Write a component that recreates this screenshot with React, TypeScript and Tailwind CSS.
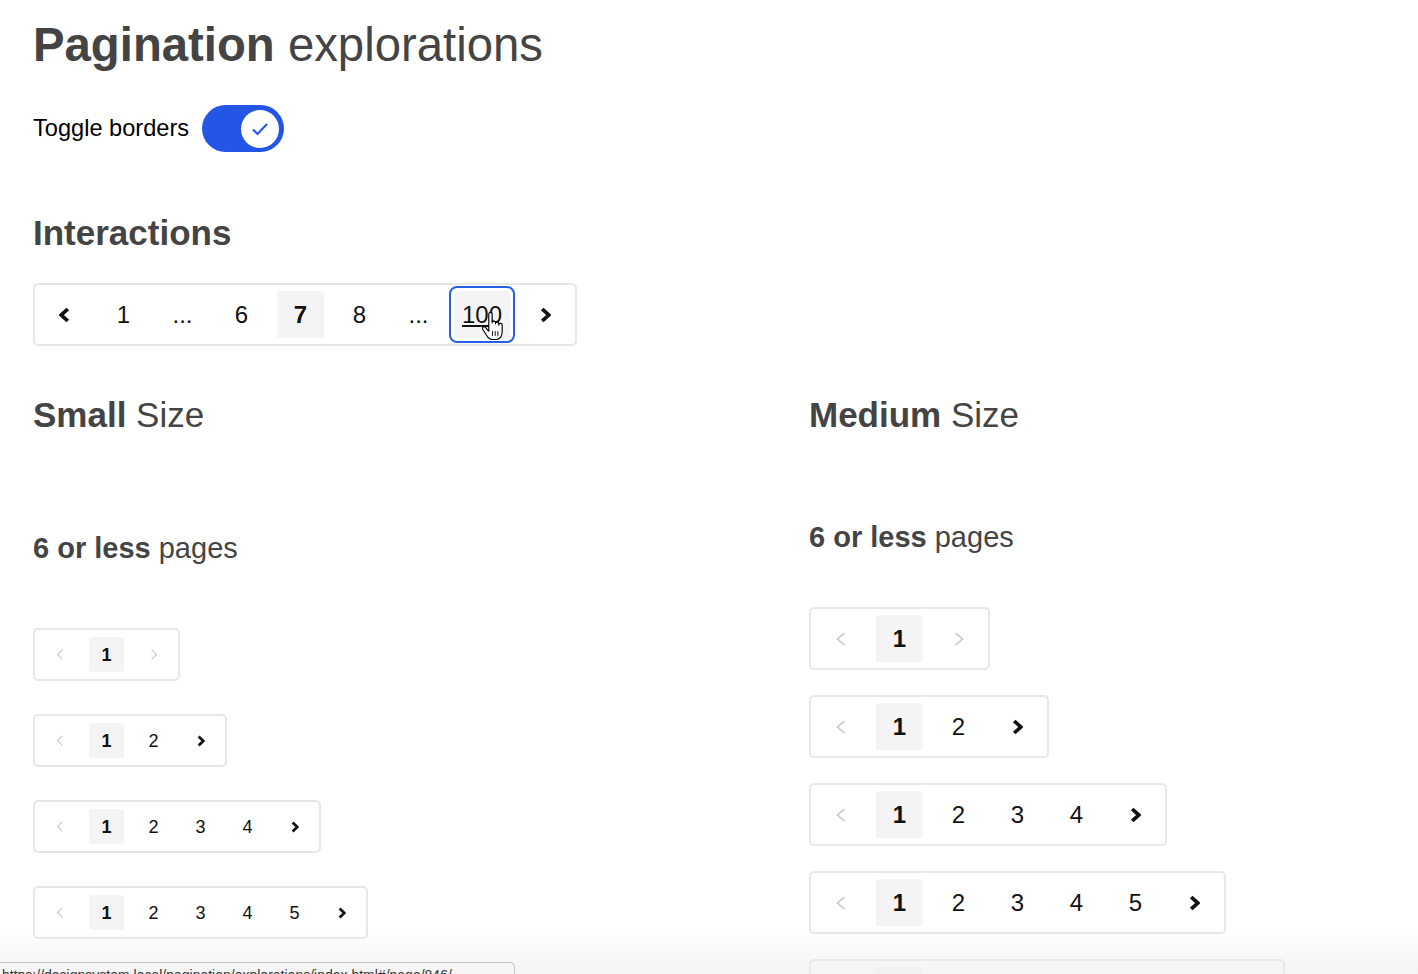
import React from "react";

type Size = "sm" | "md";

function Chevron({ dir, enabled, size }: { dir: "l" | "r"; enabled: boolean; size: Size }) {
  const w = size === "md" ? (enabled ? 11 : 12) : 8;
  const h = size === "md" ? (enabled ? 16 : 16) : enabled ? 12 : 13;
  const d = dir === "r" ? "M2 2 L8 8 L2 14" : "M8 2 L2 8 L8 14";
  return (
    <svg width={w} height={h} viewBox="0 0 10 16" preserveAspectRatio="none" aria-hidden>
      <path
        d={d}
        fill="none"
        stroke={enabled ? "#111111" : "#cdcdcd"}
        strokeWidth={enabled ? 3.4 : 1.7}
        strokeLinecap="butt"
        strokeLinejoin="miter"
      />
    </svg>
  );
}

function HandCursor() {
  return (
    <svg
      width="23"
      height="33"
      viewBox="0 0 22 30"
      className="absolute left-[28px] top-[20px] pointer-events-none"
      aria-hidden
    >
      <path
        d="M6.5 2.2 a1.6 1.6 0 0 1 3.2 0 v8.3 a1.6 1.6 0 0 1 3.2 0 v1 a1.6 1.6 0 0 1 3.2 0 v1.2 a1.6 1.6 0 0 1 3.2 0 v6.3 c0 4 -2.2 7.5 -5.5 7.5 h-4.2 c-2.2 0 -3.4 -1.2 -4.8 -3.4 l-4 -6.2 a1.6 1.6 0 0 1 2.6 -1.9 l3.1 3.6 z"
        fill="#ffffff"
        stroke="#000000"
        strokeWidth="1.1"
        strokeLinejoin="round"
      />
      <path d="M10 18.5 v4.5 M12.6 18.5 v4.5 M15.2 18.5 v4.5" stroke="#000" strokeWidth="0.9" />
    </svg>
  );
}

const FONT = { fontFamily: '"Liberation Sans", Arial, Helvetica, sans-serif' };

function Item({
  children,
  size,
  current,
  wide,
  hover,
}: {
  children: React.ReactNode;
  size: Size;
  current?: boolean;
  wide?: boolean;
  hover?: boolean;
}) {
  const base =
    size === "md"
      ? "m-[6px] h-[47px] min-w-[47px] text-[24px]"
      : "m-[6px] h-[35px] min-w-[35px] text-[18px]";
  return (
    <div
      className={
        base +
        " relative flex items-center justify-center rounded-[3px] leading-none text-[#111111] " +
        (current ? "bg-[#f4f4f4] font-bold " : "") +
        (hover ? "bg-[#f4f4f4] underline outline-2 outline-solid outline-[#2461e6] outline-offset-[3px] rounded-[2px] " : "") +
        (wide ? "px-[8px] " : "")
      }
    >
      {children}
    </div>
  );
}

function Pager({ size, pages }: { size: Size; pages: number }) {
  const nums = Array.from({ length: pages }, (_, i) => i + 1);
  return (
    <div
      className={
        "inline-flex self-start border-2 border-[#e7e7e7] rounded-[5px] bg-white " +
        (size === "sm" ? "p-[1px]" : "")
      }
    >
      <Item size={size}>
        <Chevron dir="l" enabled={false} size={size} />
      </Item>
      {nums.map((n) => (
        <Item key={n} size={size} current={n === 1}>
          {n}
        </Item>
      ))}
      <Item size={size}>
        <Chevron dir="r" enabled={pages > 1} size={size} />
      </Item>
    </div>
  );
}

export default function App() {
  return (
    <div className="min-h-screen bg-white pl-[33px] text-[#444444] overflow-hidden" style={FONT}>
      <h1 className="pt-[21px] text-[47.3px] leading-none">
        <span className="font-bold">Pagination</span> explorations
      </h1>

      <div className="mt-[37px] flex items-center gap-[13px]">
        <span className="text-[23.6px] leading-none text-black">Toggle borders</span>
        <div className="relative h-[47px] w-[82px] rounded-full bg-[#2356e6]">
          <div className="absolute right-[5px] top-[4.5px] flex h-[38px] w-[38px] items-center justify-center rounded-full bg-white">
            <svg width="18" height="14" viewBox="0 0 18 14" aria-hidden>
              <path d="M2 7.5 L6.5 12 L16 2" fill="none" stroke="#2356e6" strokeWidth="2" />
            </svg>
          </div>
        </div>
      </div>

      <h2 className="mt-[63px] text-[35px] font-bold leading-none">Interactions</h2>

      <div className="mt-[33px] inline-flex border-2 border-[#e7e7e7] rounded-[5px]">
        <Item size="md">
          <Chevron dir="l" enabled size="md" />
        </Item>
        <Item size="md">1</Item>
        <Item size="md">...</Item>
        <Item size="md">6</Item>
        <Item size="md" current>
          7
        </Item>
        <Item size="md">8</Item>
        <Item size="md">...</Item>
        <Item size="md" wide hover>
          100
          <HandCursor />
        </Item>
        <Item size="md">
          <Chevron dir="r" enabled size="md" />
        </Item>
      </div>

      <div className="mt-[51px] grid grid-cols-[776px_1fr]">
        <div className="flex flex-col">
          <h2 className="text-[35px] leading-none">
            <span className="font-bold">Small</span> Size
          </h2>
          <h3 className="mt-[102px] text-[29px] leading-none">
            <span className="font-bold">6 or less</span> pages
          </h3>
          <div className="mt-[65px] flex flex-col items-start gap-[33px]">
            <Pager size="sm" pages={1} />
            <Pager size="sm" pages={2} />
            <Pager size="sm" pages={4} />
            <Pager size="sm" pages={5} />
          </div>
        </div>
        <div className="flex flex-col">
          <h2 className="text-[35px] leading-none">
            <span className="font-bold">Medium</span> Size
          </h2>
          <h3 className="mt-[91px] text-[29px] leading-none">
            <span className="font-bold">6 or less</span> pages
          </h3>
          <div className="mt-[55px] flex flex-col items-start gap-[25px]">
            <Pager size="md" pages={1} />
            <Pager size="md" pages={2} />
            <Pager size="md" pages={4} />
            <Pager size="md" pages={5} />
            <Pager size="md" pages={6} />
          </div>
        </div>
      </div>

      <div className="pointer-events-none fixed left-0 right-0 top-[928px] h-[46px] bg-linear-to-b from-white/0 to-[#ededed]/60" />
      <div className="fixed left-0 top-[962px] h-[24px] w-[515px] overflow-hidden rounded-tr-[5px] border-t border-r border-[#c4c4c4] bg-[#f6f6f6] pl-[2px] pt-[5px] text-[14px] leading-none text-[#333]">
        https://designsystem.local/pagination/explorations/index.html#/page/846/
      </div>
    </div>
  );
}
